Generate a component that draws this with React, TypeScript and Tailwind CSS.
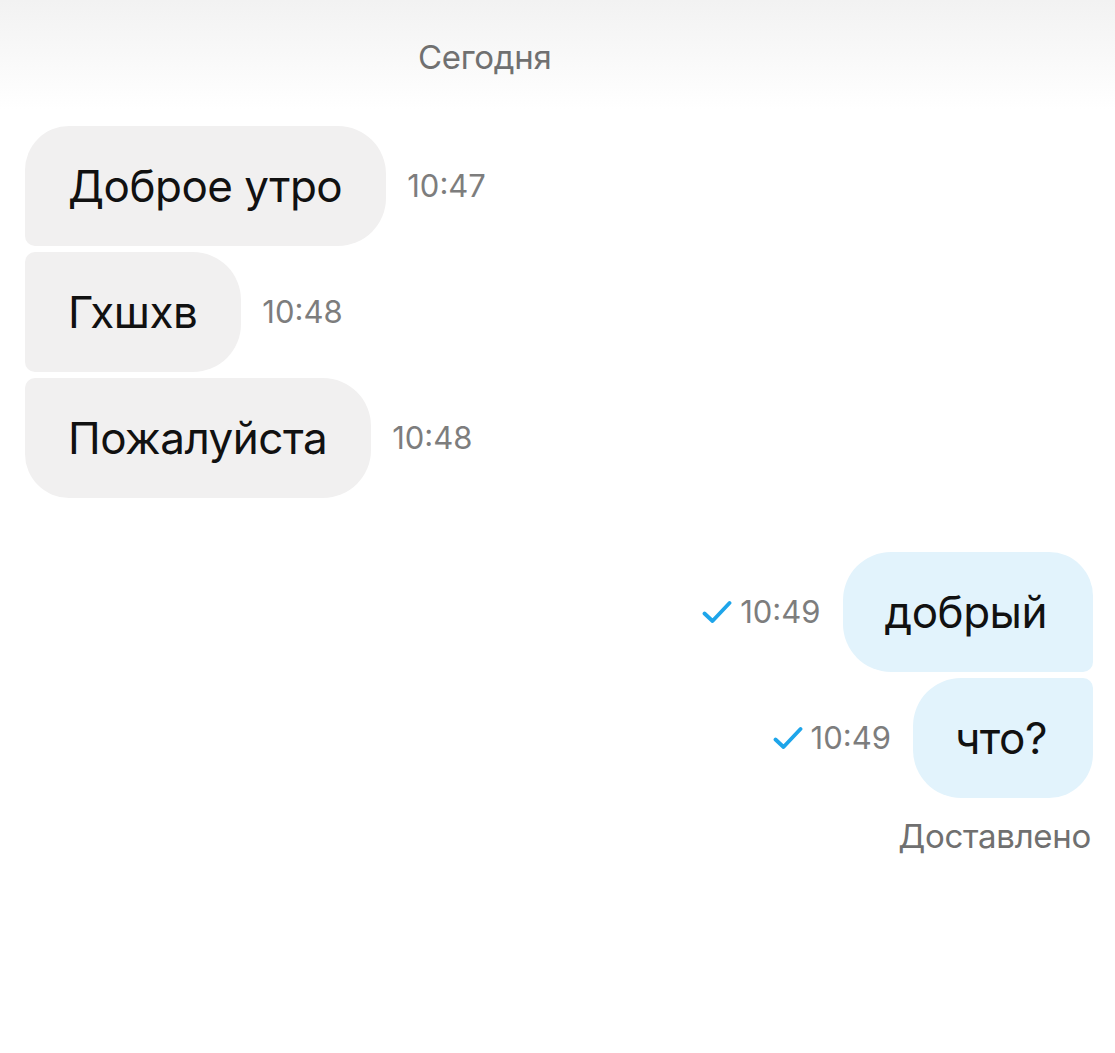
import React from "react";

const Check = () => (
  <svg width="30" height="24" viewBox="0 0 30 24" fill="none">
    <path d="M2.5 13.5 L10.5 21 L27.5 3" stroke="#1ea5ea" strokeWidth="3.8" strokeLinecap="round" strokeLinejoin="round" />
  </svg>
);

export default function App() {
  return (
    <div className="w-[1115px] h-[1053px] bg-white relative overflow-hidden" style={{ fontFamily: "Inter, 'Noto Sans', sans-serif" }}>
      <div className="h-[110px] bg-gradient-to-b from-[#f2f2f2] to-white flex justify-start pl-[418px] pt-[37px]">
        <span className="text-[33px] leading-[40px] text-[#707070] tracking-[-0.3px]">Сегодня</span>
      </div>

      <div className="flex flex-col gap-[6px] pl-[25px] pt-[16px]">
        <div className="flex items-center gap-[21px]">
          <div className="h-[120px] flex items-center pl-[43px] pr-[44px] bg-[#f1f0f0] rounded-tl-[44px] rounded-bl-[10px] rounded-r-[48px] text-[44px] text-[#111] tracking-[-0.5px]">
            Доброе утро
          </div>
          <span className="text-[31px] text-[#7d7d7d]">10:47</span>
        </div>
        <div className="flex items-center gap-[21px]">
          <div className="h-[120px] flex items-center pl-[43px] pr-[44px] bg-[#f1f0f0] rounded-l-[10px] rounded-r-[48px] text-[44px] text-[#111] tracking-[-0.5px]">
            Гхшхв
          </div>
          <span className="text-[31px] text-[#7d7d7d]">10:48</span>
        </div>
        <div className="flex items-center gap-[21px]">
          <div className="h-[120px] flex items-center pl-[43px] pr-[44px] bg-[#f1f0f0] rounded-tl-[10px] rounded-bl-[44px] rounded-r-[48px] text-[44px] text-[#111] tracking-[-0.5px]">
            Пожалуйста
          </div>
          <span className="text-[31px] text-[#7d7d7d]">10:48</span>
        </div>
      </div>

      <div className="flex flex-col items-end gap-[6px] pr-[22px] pt-[54px]">
        <div className="flex items-center gap-[22px]">
          <div className="flex items-center gap-[8px]">
            <Check />
            <span className="text-[31px] text-[#7d7d7d]">10:49</span>
          </div>
          <div className="h-[120px] flex items-center pl-[42px] pr-[46px] bg-[#e2f3fc] rounded-l-[48px] rounded-tr-[44px] rounded-br-[10px] text-[44px] text-[#111] tracking-[-0.5px]">
            добрый
          </div>
        </div>
        <div className="flex items-center gap-[22px]">
          <div className="flex items-center gap-[8px]">
            <Check />
            <span className="text-[31px] text-[#7d7d7d]">10:49</span>
          </div>
          <div className="h-[120px] flex items-center pl-[42px] pr-[46px] bg-[#e2f3fc] rounded-l-[48px] rounded-tr-[10px] rounded-br-[44px] text-[44px] text-[#111] tracking-[-0.5px]">
            что?
          </div>
        </div>
        <div className="pt-[12px] pr-[2px]">
          <span className="text-[33px] leading-[40px] text-[#707070] tracking-[-0.3px]">Доставлено</span>
        </div>
      </div>
    </div>
  );
}
